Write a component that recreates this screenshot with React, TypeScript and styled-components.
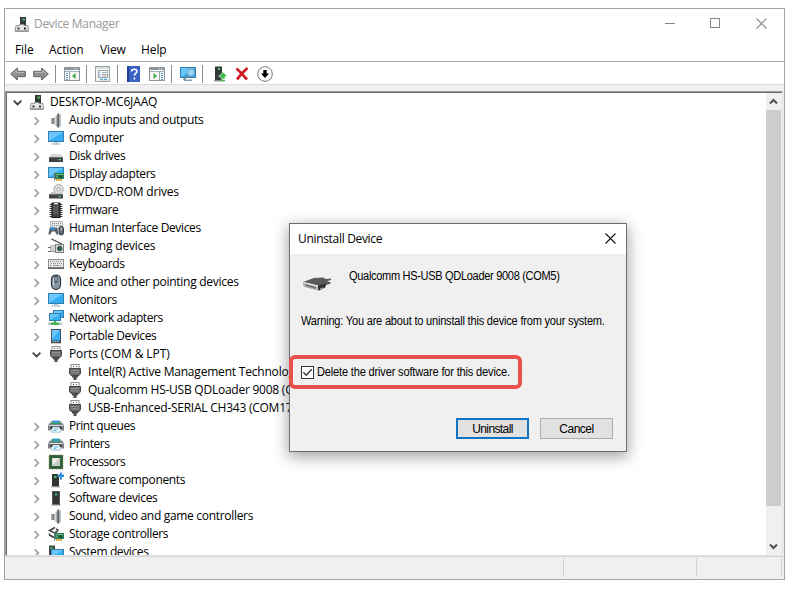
import React from "react";
import styled, { createGlobalStyle } from "styled-components";

const GlobalStyle = createGlobalStyle`
  *, *::before, *::after { box-sizing: border-box; }
  html, body { margin: 0; background: #fff; overflow: hidden; }
  svg { display: block; flex: none; }
`;

const Page = styled.main`
  width: 791px;
  height: 589px;
  padding: 8px 0 0 4px;
  position: relative;
  overflow: hidden;
  font-family: "Open Sans", "Noto Sans", sans-serif;
  font-size: 12px;
  color: #000;
`;

const Window = styled.section`
  width: 781px;
  height: 572px;
  border: 1px solid #a4a4a4;
  background: #fff;
  display: flex;
  flex-direction: column;
`;

const TitleBar = styled.header`
  height: 30px;
  display: flex;
  align-items: center;
  padding: 0 17px 0 9px;
  color: #999;
`;

const Title = styled.span`
  letter-spacing: -0.32px;
  white-space: pre;
  flex: 1;
`;

const WindowControls = styled.div`
  display: flex;
  gap: 35px;
`;

const MenuBar = styled.nav`
  height: 23px;
  border-bottom: 1px solid #aaa;
  display: flex;
  align-items: center;
  padding: 0 0 0 10px;
`;

const MenuItem = styled.span<{ $width: number }>`
  width: ${(p) => p.$width}px;
  letter-spacing: -0.1px;
`;

const Toolbar = styled.div`
  height: 23px;
  display: flex;
  align-items: center;
  padding: 2px 0 0 5px;
  border-bottom: 1px solid #dadada;
`;

const Separator = styled.i<{ $before: number; $after: number }>`
  width: 1px;
  height: 18px;
  background: #8c8c8c;
  margin: 0 ${(p) => p.$after}px 0 ${(p) => p.$before}px;
`;

const Gap = styled.i<{ $w: number }>`
  width: ${(p) => p.$w}px;
`;

const Client = styled.div`
  height: 472px;
  padding: 6px 1px 0 0;
  background: #f0f0f0;
`;

const TreePane = styled.div`
  height: 465px;
  border-top: 1px solid #a0a0a0;
  border-left: 1px solid #a0a0a0;
  border-right: 1px solid #e3e3e3;
  border-bottom: 1px solid #e3e3e3;
  display: flex;
`;

const TreeView = styled.div`
  flex: 1;
  border-top: 1px solid #696969;
  border-left: 1px solid #696969;
  background: #fff;
  overflow: hidden;
`;

const TreeRow = styled.div<{ $level: number }>`
  height: 18px;
  display: flex;
  align-items: center;
  padding-left: ${(p) => [5, 24, 43][p.$level]}px;
`;

const Expander = styled.span`
  width: 12px;
  height: 18px;
  display: flex;
  align-items: center;
  justify-content: center;
  padding-top: 2px;
`;

const IconSlot = styled.span`
  width: 26px;
  padding-left: 5px;
`;

const Label = styled.span<{ $spacing: number }>`
  letter-spacing: ${(p) => p.$spacing}px;
  white-space: pre;
  line-height: 18px;
`;

const ScrollBar = styled.div`
  width: 16px;
  border-top: 1px solid #696969;
  background: #f0f0f0;
  display: flex;
  flex-direction: column;
  justify-content: space-between;
`;

const ScrollButton = styled.button`
  height: 17px;
  width: 15px;
  padding: 0;
  border: 0;
  background: transparent;
  display: flex;
  align-items: center;
  justify-content: center;
`;

const ScrollTrack = styled.div`
  flex: 1;
`;

const ScrollThumb = styled.div`
  width: 15px;
  height: 396px;
  background: #cdcdcd;
`;

const StatusBar = styled.footer`
  height: 23px;
  background: #f0f0f0;
  border-top: 1px solid #d4d4d4;
  padding: 1px 2px 2px 0;
  display: flex;
`;

const StatusCell = styled.div<{ $width: number }>`
  width: ${(p) => p.$width}px;
  border-right: 1px solid #d4d4d4;
`;

const Dialog = styled.section`
  position: absolute;
  left: 289px;
  top: 223px;
  width: 338px;
  height: 229px;
  border: 1px solid #6e6e6e;
  background: #f0f0f0;
  box-shadow: 0 4px 14px 1px rgba(0, 0, 0, 0.36);
  font-family: "Liberation Sans", Arial, sans-serif;
`;

const DialogTitle = styled.header`
  height: 30px;
  background: #fff;
  display: flex;
  align-items: center;
  padding: 0 10px 1px 8px;
  font-family: "Open Sans", "Noto Sans", sans-serif;
`;

const DialogBody = styled.div`
  height: 197px;
  display: flex;
  flex-direction: column;
`;

const DeviceLine = styled.div`
  height: 43px;
  display: flex;
  align-items: flex-end;
  padding: 0 0 5px 12px;
  gap: 17px;
`;

/* The dialog face is a little narrower than Liberation Sans. */
const Narrow = styled.span<{ $spacing: number }>`
  display: inline-block;
  letter-spacing: ${(p) => p.$spacing}px;
  white-space: pre;
  line-height: 14px;
  transform: scaleX(0.92);
  transform-origin: 0 50%;
`;

const DeviceName = styled.div`
  align-self: flex-start;
  padding-top: 15px;
`;

const Warning = styled.p`
  margin: 17px 0 0 11px;
  height: 14px;
  line-height: 14px;
`;

const CheckRow = styled.label`
  width: 233px;
  height: 34px;
  margin-top: 27px;
  margin-left: -1px;
  border: 4px solid #e9524c;
  border-radius: 6px;
  display: flex;
  align-items: center;
  padding-left: 8px;
  gap: 3px;
`;

const CheckBox = styled.span`
  width: 13px;
  height: 13px;
  flex: none;
  border: 1px solid #333;
  background: #fff;
`;

const Actions = styled.div`
  margin-top: 29px;
  padding-right: 13px;
  display: flex;
  justify-content: flex-end;
  gap: 11px;
`;

const Button = styled.button<{ $primary?: boolean }>`
  width: 73px;
  height: 21px;
  padding: 0;
  border: ${(p) => (p.$primary ? "2px solid #0f74c4" : "1px solid #adadad")};
  background: #e1e1e1;
  font: 12px "Liberation Sans", Arial, sans-serif;
  letter-spacing: ${(p) => (p.$primary ? -0.6 : -0.5)}px;
  color: #000;
`;

/* Small drawings; each one fills a 16 x 16 box. */

type IconName =
  | "root" | "speaker" | "monitor" | "disk" | "display" | "dvd" | "firmware" | "hid"
  | "camera" | "keyboard" | "mouse" | "network" | "portable" | "port" | "printer"
  | "cpu" | "component" | "device" | "storage" | "system";

const Screen = ({ x = 0, y = 2, w = 16, h = 10 }: { x?: number; y?: number; w?: number; h?: number }) => (
  <>
    <rect x={x + 0.5} y={y + 0.5} width={w - 1} height={h - 1} fill="#35adf4" stroke="#327fae" />
    <path d={`M${x + 1} ${y + 1}h${w - 2}L${x + 1} ${y + h - 1}z`} fill="#6ac6fb" />
  </>
);

const Card = () => (
  <>
    <rect x="6" y="7" width="10" height="6" fill="#2c8053" />
    <path d="M6.5 6.500v8" stroke="#777" />
    <path d="M8 8.500h7M8 11h2" stroke="#72b68b" />
    <rect x="11" y="9.500" width="3" height="2.500" fill="#174d34" />
    <path d="M8 14h6" stroke="#e2a62c" strokeWidth="2" strokeDasharray="1.6 .6" />
  </>
);

const drawings: Record<IconName, React.ReactNode> = {
  root: (
    <>
      <rect x="6" y="1" width="6" height="9" fill="#343838" />
      <rect x="8.5" y="2.5" width="2.5" height="2" fill="#58b96b" />
      <path d="M2 9.500h3.500V8.500h4.500v1h4l.5 5.500H1z" fill="#e4e6e6" stroke="#8c8f8f" strokeWidth=".9" />
      <path d="M1 15.200h13.500" stroke="#808383" />
      <path d="M3.500 11.500h2v2h-2zM10 11.500h2v2h-2z" fill="#333" />
    </>
  ),
  speaker: (
    <>
      <path d="M3 6h3v6H3z" fill="#81868a" />
      <path d="M3 6h1.300v6H3z" fill="#a9aeb1" />
      <path d="M6 6L10.500 1.500v14.500L6 12z" fill="#aeb2b5" />
      <path d="M7.500 4.500v9" stroke="#d9dcde" />
      <path d="M10.300 1.500v14" stroke="#5c6165" strokeWidth="1.800" />
      <path d="M12 2.500v12" stroke="#9aa1a6" strokeWidth="1.400" />
    </>
  ),
  monitor: (
    <>
      <Screen y={1} h={11} />
      <path d="M6 12.500h4" stroke="#b6c5cd" />
      <path d="M3.500 14h9" stroke="#8eabbb" />
    </>
  ),
  disk: (
    <>
      <path d="M3.500 6h9.500l2 3.500H1z" fill="#d5d7d8" />
      <rect x="1" y="9.300" width="14" height="4.600" rx=".6" fill="#3c4042" />
      <rect x="10.500" y="11" width="2.500" height="1.300" fill="#56d468" />
    </>
  ),
  display: (
    <>
      <Screen y={1} h={11} />
      <Card />
    </>
  ),
  dvd: (
    <>
      <circle cx="10.500" cy="5.300" r="4.700" fill="#dcdedf" stroke="#9da1a3" strokeWidth=".9" />
      <circle cx="10.500" cy="5.300" r="1.600" fill="#fff" stroke="#8b8f91" strokeWidth=".8" />
      <path d="M3.500 8h4l3 2 3-2 1.700 2.500H1z" fill="#c6c9ca" />
      <rect x="1" y="10.200" width="14" height="4.300" rx=".5" fill="#414547" />
      <rect x="10.500" y="12" width="2.500" height="1.100" fill="#56d468" />
    </>
  ),
  firmware: (
    <>
      <path d="M1.500 2.500h13M1.500 4.500h13M1.500 6.500h13M1.500 8.500h13M1.500 10.500h13M1.500 12.500h13M1.500 14.500h13" stroke="#3a3a3a" />
      <rect x="4" y="1" width="8" height="14.500" fill="#474747" stroke="#151515" />
      <path d="M6 1h4v1.500H6z" fill="#ddd" />
      <path d="M5 4h5v8H5z" fill="#5b5b5b" />
    </>
  ),
  hid: (
    <>
      <rect x="2.500" y="1.500" width="12" height="7" fill="#e3e5e6" stroke="#a6abae" strokeWidth=".8" />
      <path d="M4 3.500h10M4 5.500h10" stroke="#868b8e" strokeDasharray="1 1" />
      <path d="M.3 14.500l1.200-6c1-1.500 2-1.500 3 0h2c1-1.500 2-1.500 3 0l1 6H8.500l-1.500-3H4l-1.700 3z" fill="#59636b" />
      <path d="M3 7h3.500v3H3z" fill="#3a95dc" />
      <rect x="11" y="6.500" width="4.500" height="8.500" rx="2.200" fill="#626b73" stroke="#292e33" strokeWidth=".9" />
      <path d="M13.200 7.500v3" stroke="#d8dde1" />
    </>
  ),
  camera: (
    <>
      <path d="M3.500 1L14 6" stroke="#3e4244" strokeWidth="1.300" />
      <path d="M0 9.500h5M0 13.500h7" stroke="#666" />
      <path d="M2.500 7.500h5v6h-5z" fill="#cfd1d2" stroke="#999" strokeWidth=".6" />
      <rect x="7.500" y="6.500" width="8" height="8" fill="#d7dadb" stroke="#7c8183" />
      <circle cx="11.700" cy="10.500" r="2.200" fill="#2b6c55" stroke="#34393c" />
    </>
  ),
  keyboard: (
    <>
      <rect x=".5" y="3.500" width="15" height="8.300" fill="#e6e8e9" stroke="#8c9194" />
      <path d="M2 5.500h12M3 7.500h11M2 9.500h2M12 9.500h2" stroke="#838a8e" strokeDasharray="1 1" />
      <path d="M5 9.500h6" stroke="#959a9d" />
      <path d="M0 12.200h16" stroke="#52575a" strokeWidth="1.400" />
    </>
  ),
  mouse: (
    <>
      <rect x="3.500" y="1" width="9" height="14.300" rx="4.200" fill="#8997a3" stroke="#353d44" strokeWidth="1.200" />
      <path d="M5.500 4v8" stroke="#c2cbd2" strokeWidth="1.200" />
      <path d="M8 1.500v7" stroke="#333b43" strokeWidth="2.600" />
      <path d="M8 3v4" stroke="#e3e7ea" />
    </>
  ),
  network: (
    <>
      <Screen x={5} y={0} w={11} h={8} />
      <Screen x={1} y={3} w={12} h={8} />
      <path d="M7 11v2" stroke="#48aa54" strokeWidth="2" />
      <path d="M0 13.700h14" stroke="#b2b8b9" strokeWidth="2" />
      <path d="M3 13.700h8" stroke="#39b64d" strokeWidth="2.400" />
    </>
  ),
  portable: (
    <>
      <rect x="3.500" y="1.500" width="9" height="13.300" fill="#3aaef5" stroke="#41545f" />
      <path d="M4 2h8L4 11z" fill="#6bc8fb" />
      <path d="M3 12.500h10V15H3z" fill="#444d52" />
      <path d="M5 13.700h6" stroke="#d4d8da" strokeDasharray="1.2 1" />
    </>
  ),
  port: (
    <>
      <rect x="4" y=".5" width="8" height="5" fill="#fafafa" stroke="#929292" />
      <path d="M6 2.500h1M9 2.500h1" stroke="#555" strokeWidth="1.200" />
      <path d="M2.500 4.500h11v5l-1.500 2H4l-1.500-2z" fill="#6a6a6a" stroke="#474747" />
      <path d="M4 6.500h8M4 8.800h8" stroke="#949494" />
      <path d="M5 12h6v1.500H9.500V16h-3v-2.500H5z" fill="#4b4b4b" />
    </>
  ),
  printer: (
    <>
      <path d="M3.500 3h9v3h-9z" fill="#2f9c6a" />
      <path d="M5 2.500h6V5H5z" fill="#3f9be0" />
      <path d="M2 4.500h2v1.500h8V4.500h2l2 3v5h-3V9H3v3.500H0v-5z" fill="#7d8387" />
      <path d="M.8 7.500h14.400" stroke="#d9dcde" />
      <path d="M2.500 8.500h11V11h-11z" fill="#26292b" />
      <path d="M4.500 9h7l1 5.200h-9z" fill="#eefaff" stroke="#8ba4ac" strokeWidth=".6" />
      <path d="M6 11h4M5.500 12.700h3" stroke="#5ab6dc" />
    </>
  ),
  cpu: (
    <>
      <rect x="1" y="1" width="14" height="14" fill="#31623e" stroke="#a59d5c" strokeDasharray="1 1" />
      <rect x="1.500" y="1.500" width="13" height="13" fill="#31623e" />
      <rect x="4" y="4" width="8" height="8" fill="#c4cac5" />
      <path d="M4.500 4.500H11L4.500 11z" fill="#eff1ef" />
    </>
  ),
  component: (
    <>
      <path d="M4 2h5.500L11 4v10.500H4z" fill="#303435" />
      <path d="M6 5h2.500" stroke="#53dc70" strokeWidth="1.700" />
      <path d="M3 14.800h9" stroke="#878c8d" />
      <path d="M9.500 2.500H12V.500h2v2h2v2.500h-2v2.500h-2V5H9.500z" fill="#328fdb" />
    </>
  ),
  device: (
    <>
      <rect x="4.500" y="1.500" width="7" height="13" fill="#303435" stroke="#54595a" />
      <path d="M7 4.500h2.200" stroke="#53dc70" strokeWidth="1.700" />
      <path d="M3.500 15h9" stroke="#878c8d" />
    </>
  ),
  storage: (
    <>
      <path d="M7 1.500L1.500 4.500l5 2.500L10 5M1.500 7.500v1.500L6 11.500M8 3l2.500 1.300" fill="none" stroke="#3a3e40" strokeWidth="1.500" />
      <Card />
    </>
  ),
  system: (
    <>
      <path d="M1 1.500h6v14H1z" fill="#42494c" />
      <path d="M2 4h3" stroke="#52d76c" />
      <Screen x={3} y={5} w={13} h={9} />
    </>
  ),
};

const Icon = ({ name }: { name: IconName }) => (
  <svg width="16" height="16" viewBox="0 0 16 16">{drawings[name]}</svg>
);

const Chevron = ({ open }: { open?: boolean }) =>
  open ? (
    <svg width="10" height="8" viewBox="0 0 10 8">
      <path d="M.8 1.700L4.600 5.500l3.800-3.800" fill="none" stroke="#404040" strokeWidth="1.800" />
    </svg>
  ) : (
    <svg width="8" height="10" viewBox="0 0 8 10">
      <path d="M1.600 1.200L5.400 5 1.600 8.800" fill="none" stroke="#a6a6a6" strokeWidth="1.800" />
    </svg>
  );

const Arrow = ({ right }: { right?: boolean }) => (
  <svg width="16" height="16" viewBox="0 0 16 16">
    <g transform={right ? "matrix(-1 0 0 1 16 0)" : undefined}>
      <path d="M.7 8L7.300 2v3.300h8v5.400h-8V14z" fill="#909090" stroke="#626262" />
      <path d="M3 7.500l3.500-3V6.400h7.700" fill="none" stroke="#bbb" />
    </g>
  </svg>
);

const ConsoleIcon = ({ flip }: { flip?: boolean }) => (
  <svg width="16" height="14" viewBox="0 0 16 14">
    <rect x=".5" y=".5" width="15" height="13" fill="#f4f6f7" stroke="#8e979d" />
    <path d="M1 2h14" stroke="#8796a0" strokeWidth="2" />
    <path d="M10 2h4" stroke="#eef3f5" strokeDasharray="1 1" />
    <path d="M1 4.500h14" stroke="#a6b0b6" />
    <g transform={flip ? "matrix(-1 0 0 1 16 0)" : undefined}>
      <path d="M5.500 5v8.500" stroke="#9aa3a8" />
      <path d="M2 6.500h2M2 8.500h2M2 10.500h2M2 12.500h2" stroke="#5c9cc4" />
      <path d="M11.500 6v6L8 9z" fill="#3eaa45" />
    </g>
  </svg>
);

const PropertiesIcon = () => (
  <svg width="15" height="16" viewBox="0 0 15 16">
    <rect x=".5" y=".5" width="14" height="15" fill="#f5f6f6" stroke="#9a9fa2" />
    <path d="M1 2h13" stroke="#c1c7ca" />
    <rect x="3.500" y="4.500" width="9" height="7" fill="#fff" stroke="#9aa3a9" />
    <path d="M4.500 6.500h1M4.500 8.500h1M4.500 10h1" stroke="#4f91bb" />
    <path d="M7 6.500h4.500M7 8.500h4.500M7 10h4.500" stroke="#9aa4aa" />
    <path d="M5 13.500h3M9 13.500h3" stroke="#55a9d1" strokeWidth="1.500" />
  </svg>
);

const HelpIcon = () => (
  <svg width="13" height="16" viewBox="0 0 13 16">
    <rect width="13" height="16" fill="#3a62c4" />
    <path d="M1 0v16" stroke="#203f91" strokeWidth="2" />
    <path d="M4.600 5.500c0-3 5.300-3 5.300-.2 0 2.300-2.500 2-2.500 4.500M7.400 11.400v2" fill="none" stroke="#fff" strokeWidth="1.600" />
  </svg>
);

const ScanIcon = () => (
  <svg width="17" height="16" viewBox="0 0 17 16">
    <Screen y={1} h={11} />
    <path d="M4 14.300h8" stroke="#80a3b5" strokeWidth="1.500" />
    <path d="M8.500 8.500L3.500 14" stroke="#62869a" strokeWidth="1.800" />
    <circle cx="10.800" cy="6.500" r="3.800" fill="#93d3fa" stroke="#6f9eb8" />
  </svg>
);

const UpdateIcon = () => (
  <svg width="14" height="16" viewBox="0 0 14 16">
    <path d="M1 .5h7v14H1z" fill="#343a3a" />
    <path d="M4 3h2" stroke="#56d46f" strokeWidth="2" />
    <path d="M0 14.800h9" stroke="#899092" strokeWidth="1.300" />
    <path d="M9 6l4.500 4.500H11V13H7v-2.500H4.500z" fill="#3dbb4c" stroke="#fff" strokeWidth=".5" />
    <path d="M7 14.500h4" stroke="#3dbb4c" strokeWidth="1.500" />
  </svg>
);

const RemoveIcon = () => (
  <svg width="14" height="14" viewBox="0 0 14 14">
    <path d="M1.500 1.500c3.500 3 6.500 6.500 10.500 11M12.500 1C8.500 4.500 5 8 2 12.500" fill="none" stroke="#ce1820" strokeWidth="2.700" />
  </svg>
);

const DisableIcon = () => (
  <svg width="16" height="16" viewBox="0 0 16 16">
    <circle cx="8" cy="8" r="7.300" fill="#fff" stroke="#777" />
    <path d="M6.300 4h3.400v3.500h2.300L8 12 4 7.500h2.300z" fill="#000" />
  </svg>
);

const UsbDevice = () => (
  <svg width="30" height="16" viewBox="0 0 30 16">
    <path d="M1 6l11-4 9-.5 3 1.500 5-.5v1.500l-4 1.200 3.500 1v1.500L24 9l-1 2.500-6 3L2 10.500z" fill="#5a5a5a" />
    <path d="M1 6l15 3.500v5L2 11z" fill="#bdbdbd" />
    <path d="M3 8l11 3v2L3 10z" fill="#777" />
    <path d="M2 6.500l14 3.500" stroke="#eee" />
    <path d="M16 10l8-2.500-1 4-6 3z" fill="#2f2f2f" />
    <path d="M18 13l3-1.200" stroke="#bbb" />
  </svg>
);

const Close = ({ color }: { color: string }) => (
  <svg width="11" height="11" viewBox="0 0 11 11">
    <path d="M.5.5l10 10M10.500.5l-10 10" stroke={color} strokeWidth="1.100" />
  </svg>
);

const ScrollArrow = ({ up }: { up?: boolean }) => (
  <svg width="9" height="7" viewBox="0 0 9 7">
    <path d={up ? "M1 5.500L4.500 2 8 5.500" : "M1 1.500L4.500 5 8 1.500"} fill="none" stroke="#505050" strokeWidth="2" />
  </svg>
);

interface TreeNode {
  text: string;
  icon: IconName;
  level: number;
  open?: boolean;
  spacing: number;
}

const nodes: TreeNode[] = [
  { text: "DESKTOP-MC6JAAQ", icon: "root", level: 0, open: true, spacing: -0.13 },
  { text: "Audio inputs and outputs", icon: "speaker", level: 1, spacing: -0.31 },
  { text: "Computer", icon: "monitor", level: 1, spacing: -0.22 },
  { text: "Disk drives", icon: "disk", level: 1, spacing: -0.4 },
  { text: "Display adapters", icon: "display", level: 1, spacing: -0.43 },
  { text: "DVD/CD-ROM drives", icon: "dvd", level: 1, spacing: -0.22 },
  { text: "Firmware", icon: "firmware", level: 1, spacing: -0.45 },
  { text: "Human Interface Devices", icon: "hid", level: 1, spacing: -0.36 },
  { text: "Imaging devices", icon: "camera", level: 1, spacing: -0.18 },
  { text: "Keyboards", icon: "keyboard", level: 1, spacing: -0.42 },
  { text: "Mice and other pointing devices", icon: "mouse", level: 1, spacing: -0.27 },
  { text: "Monitors", icon: "monitor", level: 1, spacing: -0.33 },
  { text: "Network adapters", icon: "network", level: 1, spacing: -0.42 },
  { text: "Portable Devices", icon: "portable", level: 1, spacing: -0.36 },
  { text: "Ports (COM & LPT)", icon: "port", level: 1, open: true, spacing: -0.1 },
  { text: "Intel(R) Active Management Technology - SOL (COM3)", icon: "port", level: 2, spacing: -0.2 },
  { text: "Qualcomm HS-USB QDLoader 9008 (COM5)", icon: "port", level: 2, spacing: -0.24 },
  { text: "USB-Enhanced-SERIAL CH343 (COM17)", icon: "port", level: 2, spacing: -0.24 },
  { text: "Print queues", icon: "printer", level: 1, spacing: -0.43 },
  { text: "Printers", icon: "printer", level: 1, spacing: -0.45 },
  { text: "Processors", icon: "cpu", level: 1, spacing: -0.5 },
  { text: "Software components", icon: "component", level: 1, spacing: -0.36 },
  { text: "Software devices", icon: "device", level: 1, spacing: -0.36 },
  { text: "Sound, video and game controllers", icon: "speaker", level: 1, spacing: -0.31 },
  { text: "Storage controllers", icon: "storage", level: 1, spacing: -0.37 },
  { text: "System devices", icon: "system", level: 1, spacing: -0.38 },
];

export default function App() {
  return (
    <Page>
      <GlobalStyle />
      <Window>
        <TitleBar>
          <Icon name="root" />
          <Gap $w={4} />
          <Title>Device Manager</Title>
          <WindowControls>
            <svg width="10" height="11" viewBox="0 0 10 11"><path d="M0 5.500h10" stroke="#888" /></svg>
            <svg width="11" height="11" viewBox="0 0 11 11"><rect x=".5" y=".5" width="9" height="9" fill="none" stroke="#888" /></svg>
            <Close color="#888" />
          </WindowControls>
        </TitleBar>
        <MenuBar>
          <MenuItem $width={34}>File</MenuItem>
          <MenuItem $width={51}>Action</MenuItem>
          <MenuItem $width={41}>View</MenuItem>
          <MenuItem $width={40}>Help</MenuItem>
        </MenuBar>
        <Toolbar>
          <Arrow />
          <Gap $w={7} />
          <Arrow right />
          <Separator $before={6} $after={8} />
          <ConsoleIcon />
          <Separator $before={6} $after={8} />
          <PropertiesIcon />
          <Separator $before={7} $after={9} />
          <HelpIcon />
          <Gap $w={9} />
          <ConsoleIcon flip />
          <Separator $before={6} $after={8} />
          <ScanIcon />
          <Separator $before={5} $after={11} />
          <UpdateIcon />
          <Gap $w={7} />
          <RemoveIcon />
          <Gap $w={8} />
          <DisableIcon />
        </Toolbar>
        <Client>
          <TreePane>
            <TreeView>
              {nodes.map((n) => (
                <TreeRow key={n.text} $level={n.level}>
                  <Expander>{n.level < 2 && <Chevron open={n.open} />}</Expander>
                  <IconSlot><Icon name={n.icon} /></IconSlot>
                  <Label $spacing={n.spacing}>{n.text}</Label>
                </TreeRow>
              ))}
            </TreeView>
            <ScrollBar>
              <ScrollButton aria-label="Scroll up"><ScrollArrow up /></ScrollButton>
              <ScrollTrack><ScrollThumb /></ScrollTrack>
              <ScrollButton aria-label="Scroll down"><ScrollArrow /></ScrollButton>
            </ScrollBar>
          </TreePane>
        </Client>
        <StatusBar>
          <StatusCell $width={559} />
          <StatusCell $width={133} />
          <StatusCell $width={85} />
        </StatusBar>
      </Window>
      <Dialog>
        <DialogTitle>
          <Title>Uninstall Device</Title>
          <Close color="#111" />
        </DialogTitle>
        <DialogBody>
          <DeviceLine>
            <UsbDevice />
            <DeviceName>
              <Narrow $spacing={-0.35}>Qualcomm HS-USB QDLoader 9008 (COM5)</Narrow>
            </DeviceName>
          </DeviceLine>
          <Warning>
            <Narrow $spacing={-0.22}>Warning: You are about to uninstall this device from your system.</Narrow>
          </Warning>
          <CheckRow>
            <CheckBox>
              <svg width="11" height="11" viewBox="0 0 11 11">
                <path d="M1.300 5.300L4.200 8.200 9.700 2.200" fill="none" stroke="#333" strokeWidth="1.300" />
              </svg>
            </CheckBox>
            <Narrow $spacing={-0.18}>Delete the driver software for this device.</Narrow>
          </CheckRow>
          <Actions>
            <Button $primary>Uninstall</Button>
            <Button>Cancel</Button>
          </Actions>
        </DialogBody>
      </Dialog>
    </Page>
  );
}
